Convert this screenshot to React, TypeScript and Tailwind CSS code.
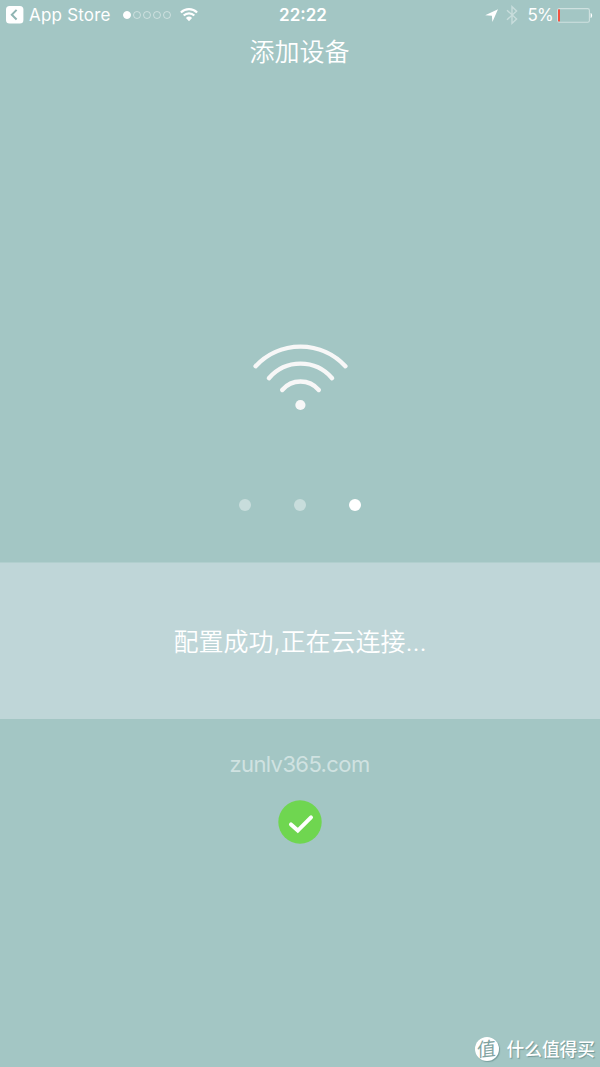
import React from 'react';
import clsx from 'clsx';

const signalDots = [true, false, false, false, false];
const steps = [false, false, true];

const BackIcon = () => (
    <svg width="18" height="18" viewBox="0 0 18 18" fill="none">
        <rect x="0" y="0" width="17.4" height="17.4" rx="3.5" fill="#fff" />
        <path
            d="M10.6 3.9 5.8 8.7l4.8 4.8"
            stroke="#8fb5b3"
            strokeWidth="2"
        />
    </svg>
);

const StatusWifiIcon = () => (
    <svg width="18" height="14" viewBox="0 0 18 14" fill="none">
        <path
            d="M0.9 4.5a11.6 11.6 0 0 1 16.2 0M3.7 7.6a7.4 7.4 0 0 1 10.6 0"
            stroke="#fff"
            strokeWidth="2.2"
        />
        <path d="M9 13.2 5.9 10a4.5 4.5 0 0 1 6.2 0Z" fill="#fff" />
    </svg>
);

const LocationIcon = () => (
    <svg width="13" height="13" viewBox="0 0 13 13">
        <path d="M13 0.2 7.4 13 6.9 6.7 0.2 6.3Z" fill="#fff" />
    </svg>
);

const BluetoothIcon = () => (
    <svg width="12" height="20" viewBox="0 0 12 20" fill="none">
        <path
            d="M1 5.2 10.6 14 6 18.3V1.7L10.6 6 1 14.8"
            stroke="#c8dddc"
            strokeWidth="1.4"
        />
    </svg>
);

const BatteryIcon = () => (
    <svg width="36" height="15" viewBox="0 0 36 15" fill="none">
        <rect
            x="0.6"
            y="0.6"
            width="31.8"
            height="13.6"
            rx="1.8"
            stroke="#cfe1e0"
            strokeWidth="1.1"
        />
        <rect x="1" y="1.4" width="2" height="12" fill="#f2513f" />
        <path d="M33.6 5c2 .6 2 4.4 0 5Z" fill="#fff" />
    </svg>
);

const StatusBar = () => (
    <header className="grid h-[30px] grid-cols-3 items-center text-[17px] leading-[29px]">
        <div className="flex h-[29px] items-center pl-[6px]">
            <BackIcon />
            <span className="ml-[5px] whitespace-nowrap text-[17px] tracking-[0.2px]">
                App Store
            </span>
            <div className="ml-[12px] flex gap-[2px]">
                {signalDots.map((active, index) => (
                    <span
                        key={index}
                        className={clsx(
                            'h-[8px] w-[8px] rounded-full border',
                            active
                                ? 'border-white bg-white'
                                : 'border-white/45'
                        )}
                    />
                ))}
            </div>
            <div className="ml-[9px]">
                <StatusWifiIcon />
            </div>
        </div>
        <span className="pl-[6px] text-center font-semibold">22:22</span>
        <div className="flex h-[29px] items-center justify-end pr-[7px]">
            <LocationIcon />
            <div className="ml-[8px]">
                <BluetoothIcon />
            </div>
            <span className="ml-[10px] mr-[4px] text-[17px] tracking-[-0.8px]">
                5%
            </span>
            <BatteryIcon />
        </div>
    </header>
);

const WifiSignal = () => (
    <svg
        width="100"
        height="72"
        viewBox="0 0 100 72"
        fill="none"
        stroke="#f7f7f7"
        strokeWidth="4.4"
        strokeLinecap="round"
    >
        <path d="M5.6 26.2a61.2 61.2 0 0 1 89.8 0" />
        <path d="M18.9 38.2a41.6 41.6 0 0 1 63.2 0" />
        <path d="M32.2 50a24 24 0 0 1 36.6 0" />
        <circle cx="50.4" cy="65" r="5.1" fill="#f7f7f7" stroke="none" />
    </svg>
);

const SuccessIcon = () => (
    <svg width="44" height="44" viewBox="0 0 44 44" fill="none">
        <circle cx="22" cy="22" r="21.7" fill="#6fd650" />
        <path
            d="m13 24.4 6.8 6.2L33 17.4"
            stroke="#fff"
            strokeWidth="4"
            strokeLinecap="round"
            strokeLinejoin="miter"
        />
    </svg>
);

const Watermark = () => (
    <footer className="mt-auto flex h-[36px] items-center justify-end pr-[5px]">
        <span className="mr-[8px] flex h-[24px] w-[24px] items-center justify-center rounded-full bg-white text-[19px] leading-none text-[#7fa3a1] shadow-[1px_1px_1px_rgba(80,120,120,0.5)]">
            <span className="-rotate-6 -skew-x-6">值</span>
        </span>
        <span className="pt-[1px] text-[17.7px] font-medium leading-[35px] [text-shadow:1px_1px_1px_rgba(80,120,120,0.6)]">
            什么值得买
        </span>
    </footer>
);

export default function App() {
    return (
        <div className="flex h-[1067px] w-[600px] flex-col overflow-hidden bg-[#a3c6c4] font-[Inter,'Noto_Sans_CJK_SC',sans-serif] text-white">
            <StatusBar />
            <h1 className="h-[44px] pr-[1px] text-center text-[25px] font-[350] leading-[44px]">
                添加设备
            </h1>
            <main className="flex flex-col items-center">
                <div className="mt-[266px]">
                    <WifiSignal />
                </div>
                <div className="mt-[87px] flex gap-[43px]">
                    {steps.map((active, index) => (
                        <span
                            key={index}
                            className={clsx(
                                'h-[12px] w-[12px] rounded-full',
                                active ? 'bg-white' : 'bg-[#c8dddc]'
                            )}
                        />
                    ))}
                </div>
                <div className="mt-[51px] flex h-[157px] w-full items-center justify-center border-t border-[#b1cfce] bg-[#bfd6d8]">
                    <p className="pt-[2px] text-[25px] font-[350] leading-none">
                        配置成功,正在云连接...
                    </p>
                </div>
                <p className="mt-[31px] pr-[1px] text-[22px] leading-[28px] tracking-[-0.6px] text-[#d0e2e1]">
                    zunlv365.com
                </p>
                <div className="mt-[22px]">
                    <SuccessIcon />
                </div>
            </main>
            <Watermark />
        </div>
    );
}
